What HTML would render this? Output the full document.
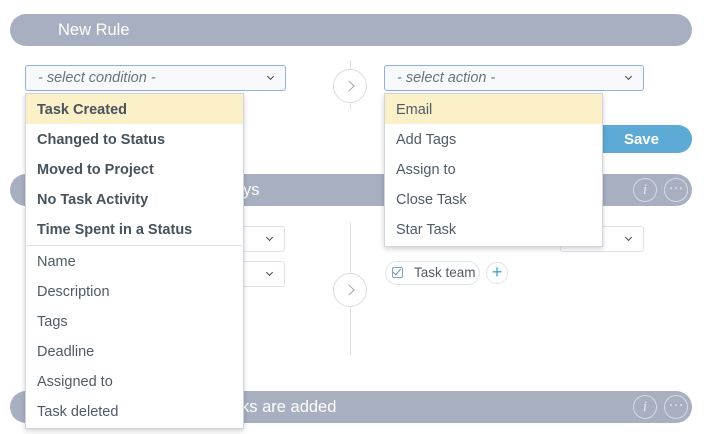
<!DOCTYPE html>
<html><head><meta charset="utf-8">
<style>
*{box-sizing:border-box;margin:0;padding:0}
body{width:704px;height:434px;background:#fff;position:relative;overflow:hidden;font-family:"Liberation Sans",sans-serif;color:#4a5560}
.a{position:absolute}
.bar{position:absolute;left:10px;width:682px;height:32px;border-radius:16px;background:#a8afc1;color:#fff;font-size:16.5px;line-height:32px}
.sel{position:absolute;height:26px;border:1px solid #dfe3e8;border-radius:3px;background:#fff}
.sel.f{border-color:#8fb0e0;background:#f7f9fc;font-style:italic;color:#6a737c;font-size:14.5px;line-height:24px;padding-left:12px}
.chev{position:absolute;right:12px;top:8px;width:5px;height:5px;border-right:1.5px solid #444;border-bottom:1.5px solid #444;transform:rotate(45deg)}
.circ{position:absolute;width:34px;height:34px;border-radius:50%;border:1px solid #d8dde3;background:#fff}
.circ:after{content:"";position:absolute;left:11px;top:12px;width:7px;height:7px;border-right:1.5px solid #9aa3ad;border-top:1.5px solid #9aa3ad;transform:rotate(45deg)}
.vl{position:absolute;left:350px;width:1px;background:#dde2e7}
.dd{position:absolute;background:#fff;border:1px solid #cfd5dc;box-shadow:0 2px 5px rgba(0,0,0,.18);font-size:14.5px}
.it{height:30px;line-height:32px;padding-left:11px;color:#4f5b66}
.b{font-weight:bold;color:#46525c}
.hl{background:#fbf0c8}
.ic{position:absolute;width:24px;height:24px;border-radius:50%;border:1px solid #d6dae3;color:#e6e9ef;text-align:center;line-height:22px;font-size:15px}
</style></head><body>
<div class="bar" style="top:14px;padding-left:48px">New Rule</div>

<div class="vl" style="top:60px;height:50px"></div>
<div class="circ" style="left:333px;top:69px"></div>
<div class="sel f" style="left:25px;top:65px;width:261px">- select condition -<div class="chev"></div></div>
<div class="sel f" style="left:384px;top:65px;width:260px">- select action -<div class="chev"></div></div>

<div class="a" style="left:580px;top:125px;width:112px;height:28px;border-radius:14px;background:#5eaad6;color:#fff;font-weight:bold;font-size:15px;line-height:29px;text-align:right;padding-right:33px">Save</div>

<div class="bar" style="top:174px"><span class="a" style="left:233px">ys</span></div>
<div class="ic" style="left:633px;top:178px;font-style:italic;font-family:'Liberation Serif',serif">i</div>
<div class="ic" style="left:664px;top:178px;line-height:18px">···</div>

<div class="sel" style="left:200px;top:226px;width:85px"><div class="chev"></div></div>
<div class="sel" style="left:200px;top:261px;width:85px"><div class="chev"></div></div>
<div class="sel" style="left:560px;top:226px;width:84px"><div class="chev"></div></div>
<div class="vl" style="top:222px;height:133px"></div>
<div class="circ" style="left:333px;top:273px"></div>
<div class="a" style="left:385px;top:261px;width:95px;height:24px;border:1.5px solid #dfe6e6;border-radius:12px;font-size:13.5px;line-height:22px;padding-left:28px;color:#4f5b66">Task team
<div class="a" style="left:6px;top:5px;width:11px;height:11px;border:1px solid #7ea3b8;border-radius:2px"></div>
<div class="a" style="left:9px;top:5px;width:4px;height:8px;border-right:1.5px solid #5f8ca5;border-bottom:1.5px solid #5f8ca5;transform:rotate(40deg)"></div></div>
<div class="a" style="left:486px;top:262px;width:22px;height:22px;border-radius:50%;border:1px solid #dfe3e8;color:#3fa3d8;font-size:18px;line-height:19px;text-align:center">+</div>

<div class="bar" style="top:391px"><span class="a" style="left:231px">ks are added</span></div>
<div class="ic" style="left:633px;top:395px;font-style:italic;font-family:'Liberation Serif',serif">i</div>
<div class="ic" style="left:664px;top:395px;line-height:18px">···</div>

<div class="dd" style="left:25px;top:93px;width:219px;height:336px">
<div class="it b hl">Task Created</div>
<div class="it b">Changed to Status</div>
<div class="it b">Moved to Project</div>
<div class="it b">No Task Activity</div>
<div class="it b">Time Spent in a Status</div>
<div style="height:1px;background:#dfe3e8;margin:0 1px 0 1px;position:relative;top:1px"></div>
<div class="it" style="margin-top:1px">Name</div>
<div class="it">Description</div>
<div class="it">Tags</div>
<div class="it">Deadline</div>
<div class="it">Assigned to</div>
<div class="it">Task deleted</div>
</div>

<div class="dd" style="left:384px;top:93px;width:219px;height:154px">
<div class="it hl">Email</div>
<div class="it">Add Tags</div>
<div class="it">Assign to</div>
<div class="it">Close Task</div>
<div class="it">Star Task</div>
</div>
</body></html>
